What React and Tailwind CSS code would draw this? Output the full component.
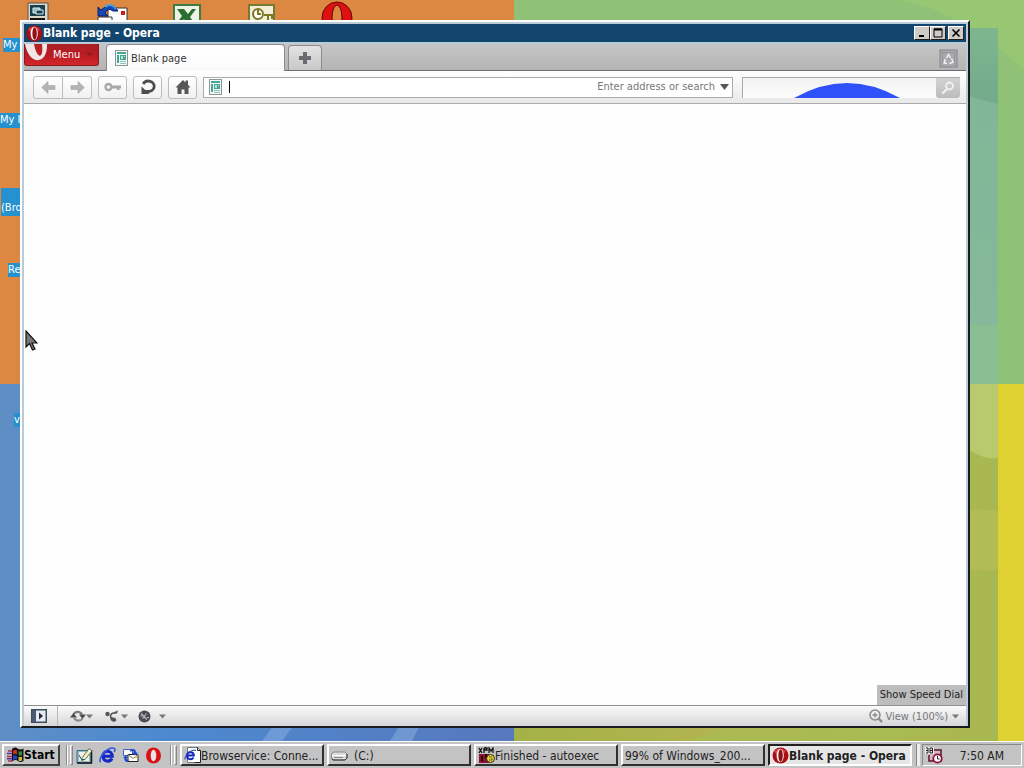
import { useState } from "react";

const RAISED = "border-2 border-t-white border-l-white border-r-[#404040] border-b-[#404040] bg-[#c3c3c3]";

const SHORTCUT_LABELS = [
  { text: "My", className: "top-[38px] left-[3px] h-3.5 w-[17px]" },
  { text: "My I", className: "top-[113px] left-0 h-[15px] w-5" },
  { text: "(Bro", className: "top-[188px] left-[1px] h-7 w-6 pt-[13px]" },
  { text: "Re", className: "top-[263px] left-2 h-3.5 w-4" },
  { text: "v", className: "top-[413px] left-[14px] h-3.5 w-[7px]" },
];

const TASKS = [
  { id: "browservice", text: "Browservice: Conne...", Icon: IePageIcon },
  { id: "drive", text: "(C:)", Icon: DriveIcon },
  { id: "autoexec", text: "Finished - autoexec", Icon: DosIcon },
  { id: "windows", text: "99% of Windows_200..." },
  { id: "opera", text: "Blank page - Opera", Icon: OperaIcon },
];

const QUICK_LAUNCH = [
  { label: "Show Desktop", Icon: DesktopIcon },
  { label: "Internet Explorer", Icon: IeIcon },
  { label: "Outlook Express", Icon: MailIcon },
  { label: "Opera", Icon: OperaFlatIcon },
];

/* ---------- Icons ---------- */

function OperaIcon() {
  return (
    <svg width="17" height="17" viewBox="0 0 17 17" aria-hidden="true">
      <ellipse cx="8.5" cy="8.5" rx="8" ry="8" fill="#a80d14" />
      <path d="M2 4Q8-1 14 4L11 8H5Z" fill="#dd3b3b" />
      <ellipse cx="8.2" cy="8.5" rx="3.6" ry="6.8" fill="#f4f0f0" />
      <ellipse cx="8.6" cy="8.5" rx="2.2" ry="6.2" fill="#8e1118" />
    </svg>
  );
}

function OperaFlatIcon() {
  return (
    <svg width="17" height="17" viewBox="0 0 17 17" aria-hidden="true">
      <ellipse cx="8.5" cy="8.5" rx="7.5" ry="8" fill="#d91218" />
      <ellipse cx="8.5" cy="8.5" rx="2.8" ry="5.8" fill="#e9e5e5" />
    </svg>
  );
}

function PageIcon() {
  return (
    <svg width="13" height="16" viewBox="0 0 13 16" className="shrink-0" aria-hidden="true">
      <rect x=".5" y=".5" width="12" height="15" fill="#f4f8f7" stroke="#8b9794" />
      <path d="M2 2h9v2H2zM2 5h2v8H2zM5 5h6v5H5z" fill="#45a693" />
      <path d="M6 6h2v3H6zM9 6h1v1H9z" fill="#b9e2d7" />
      <path d="M5 11.5h6M5 13.5h6" stroke="#8ac4b6" />
    </svg>
  );
}

function ArrowIcon({ flip }) {
  return (
    <svg width="15" height="13" viewBox="0 0 15 13" className={flip ? "-scale-x-100" : ""} aria-hidden="true">
      <path d="M7 .5v4h7v4H7v4L.7 6.5Z" fill="#b3b3b3" stroke="#a4a4a4" strokeWidth=".6" />
    </svg>
  );
}

function KeyIcon() {
  return (
    <svg width="18" height="10" viewBox="0 0 18 10" aria-hidden="true">
      <circle cx="4.5" cy="5" r="3" fill="none" stroke="#a8a8a8" strokeWidth="2.4" />
      <path d="M8 3.5h9v3h-1.5V8H13V6.5H8Z" fill="#a8a8a8" />
    </svg>
  );
}

function ReloadIcon() {
  return (
    <svg width="18" height="18" viewBox="0 0 18 18" aria-hidden="true">
      <path d="M4.2 6A5.8 5.2 0 1 1 9.500 13.500" fill="none" stroke="#4d4d4d" strokeWidth="2.8" />
      <path d="M2.500 8.500v7.500h8Z" fill="#4d4d4d" />
      <path d="M6 13.500h4" stroke="#4d4d4d" strokeWidth="3" />
    </svg>
  );
}

function HomeIcon() {
  return (
    <svg width="16" height="16" viewBox="0 0 16 16" aria-hidden="true">
      <path d="M8 1l2.500 2.400V1.500H13v4.300L15.500 8.500H13.500V15H9.500v-4.500h-3V15h-4V8.500H.5Z" fill="#575757" />
    </svg>
  );
}

function TrashIcon() {
  return (
    <svg width="19" height="19" viewBox="0 0 19 19" aria-hidden="true">
      <rect x="1" y="1" width="17" height="17" fill="#a9a9ae" stroke="#85858b" />
      <path d="M1 3.500h17M3.500 4v14M15.500 4v14" stroke="#96969d" />
      <path d="M7.500 9l2-3.500 2 3.500M12.500 9.500l1.500 3.500-3.500 1.500M8 14.500l-3-.5L6.500 10" fill="none" stroke="#f4f4f6" strokeWidth="1.500" />
    </svg>
  );
}

function SearchIcon() {
  return (
    <svg width="14" height="14" viewBox="0 0 14 14" fill="none" stroke="#f1f1f1" aria-hidden="true">
      <circle cx="8.500" cy="5" r="3.500" strokeWidth="1.800" />
      <path d="M6 8l-4.500 4.500" strokeWidth="2.400" />
    </svg>
  );
}

function Caret({ className = "" }) {
  return (
    <svg width="7" height="5" viewBox="0 0 7 5" className={`shrink-0 ${className}`} aria-hidden="true">
      <path d="M0 .5h7L3.500 4.500Z" fill="currentColor" />
    </svg>
  );
}

function PanelIcon() {
  return (
    <svg width="16" height="14" viewBox="0 0 16 14" aria-hidden="true">
      <rect x=".75" y=".75" width="14.500" height="12.500" fill="#e8ebef" stroke="#3f4c60" strokeWidth="1.500" />
      <path d="M1 1h4v12H1z" fill="#4a5a74" />
      <path d="M8 3.500v7L12 7Z" fill="#222b3a" />
    </svg>
  );
}

function SyncIcon() {
  return (
    <svg width="16" height="12" viewBox="0 0 16 12" aria-hidden="true">
      <path d="M3.500 4C5.500 1 10 1 12 4.500" fill="none" stroke="#77787c" strokeWidth="2.200" />
      <path d="M9 4.500h7L12.500 9Z" fill="#4b4c50" />
      <path d="M12.500 8.500C10.500 11.500 6 11.500 4 8" fill="none" stroke="#8b8c90" strokeWidth="2.200" />
      <path d="M0 7.500h7L3.500 3Z" fill="#4b4c50" />
    </svg>
  );
}

function UniteIcon() {
  return (
    <svg width="14" height="13" viewBox="0 0 14 13" fill="#55565a" aria-hidden="true">
      <circle cx="2.500" cy="4" r="2.200" />
      <path d="M8 2.500L13 .5l-1 3-4 .5Z" />
      <path d="M5 6.500c0 3 1 5 4 5.500l2.500-1.500-1-2.500L8 7.500Z" />
      <path d="M8 3c-2.500 1-3 3-2 5" fill="none" stroke="#55565a" strokeWidth="1.500" />
    </svg>
  );
}

function TurboIcon() {
  return (
    <svg width="13" height="13" viewBox="0 0 13 13" aria-hidden="true">
      <circle cx="6.500" cy="6.500" r="6" fill="#4a4b55" />
      <path d="M3 3.500l6 6M4.500 8.500l4-5M2.500 6h2M9 7.500h2" stroke="#b9bac1" strokeWidth="1.200" />
    </svg>
  );
}

function ZoomInIcon() {
  return (
    <svg width="14" height="14" viewBox="0 0 14 14" fill="none" stroke="#8b8b8b" aria-hidden="true">
      <circle cx="6" cy="6" r="5" strokeWidth="1.500" />
      <path d="M3.500 6h5M6 3.500v5" strokeWidth="1.300" />
      <path d="M9.500 9.500l3.500 3.500" strokeWidth="2.400" />
    </svg>
  );
}

function IeIcon() {
  return (
    <svg width="17" height="17" viewBox="0 0 17 17" fill="none" aria-hidden="true">
      <path d="M13 11.500C11 15.500 4 15 4 9S13 2.500 13.300 9.300H5" stroke="#1426c4" strokeWidth="3" />
      <path d="M1.500 15.500C-1 11 9-1 15.500 1.500c1.200.8.300 2.500-.5 3.500" stroke="#2d57dc" strokeWidth="1.500" />
    </svg>
  );
}

function IePageIcon() {
  return (
    <svg width="17" height="16" viewBox="0 0 17 16" fill="none" aria-hidden="true">
      <path d="M3.500.5h10l3 3v12h-13Z" fill="#fff" stroke="#777" />
      <path d="M13.500.5v3h3v12h-6" stroke="#222" />
      <path d="M9.500 10.500C7.500 13.500 3 12.500 3 8.500S9.500 4 9.800 8.500H3.500" stroke="#1426c4" strokeWidth="2" />
      <path d="M1 12.500C0 9 7 1.500 12 3.500" stroke="#2646b4" />
    </svg>
  );
}

function DesktopIcon() {
  return (
    <svg width="17" height="17" viewBox="0 0 17 17" aria-hidden="true">
      <path d="M1 3.500h14V16H1z" fill="#9fb8be" stroke="#35708c" />
      <path d="M3 5h10v9H3z" fill="#f0f2e6" />
      <path d="M1 16h14.500V3" fill="none" stroke="#101820" strokeWidth="1.500" />
      <path d="M6 11L13 1.500 16 4l-7 8.500-3.500 1Z" fill="#f3f0c8" stroke="#4a4a30" strokeWidth=".8" />
      <path d="M3 8l2.500 4.500H9" fill="none" stroke="#1e5f78" />
    </svg>
  );
}

function MailIcon() {
  return (
    <svg width="17" height="17" viewBox="0 0 17 17" aria-hidden="true">
      <path d="M1.500 2.500h9v6h-9z" fill="#fff" stroke="#3d63c6" />
      <path d="M6 7.500h10v7H6z" fill="#fff" stroke="#222" />
      <path d="M6 7.500l5 4 5-4" fill="none" stroke="#777" />
      <path d="M8 3.500c3-3 6-1.500 6 2h2l-3 3-3-3h2C12 4 10 3.500 8 5ZM6 15c-3 0-4-2-3.500-4H1l2.500-2.500L6 11H4.500c0 1 .5 2 2 2Z" fill="#1f46d0" />
      <path d="M13 9h2v2h-2z" fill="#e8c11a" />
    </svg>
  );
}

function DriveIcon() {
  return (
    <svg width="17" height="11" viewBox="0 0 17 11" aria-hidden="true">
      <path d="M3 2h11l2 2v4l-2 2H2L.5 8V4Z" fill="#dcdcdc" stroke="#888" />
      <path d="M1 5.500h14" stroke="#fff" />
      <path d="M1 8.500l1 1.500h12l2-2V4" fill="none" stroke="#333" />
      <path d="M3 7.500h9" stroke="#888" />
    </svg>
  );
}

function DosIcon() {
  return (
    <svg width="17" height="17" viewBox="0 0 17 17" aria-hidden="true">
      <path d="M1 1l3 5M4 1L1 6M6 1v5M6 1h3v2H6M11 6V1l2 3 2-3v5" fill="none" stroke="#111" strokeWidth="1.300" />
      <path d="M1 7h10v9H1z" fill="#8d1130" />
      <path d="M3 9h2v5H3zM7 7h2v4H7z" fill="#200" />
      <circle cx="12.500" cy="11.500" r="4" fill="#ead52b" stroke="#222" />
      <path d="M11 10h3M11 13h3v-2" stroke="#555" fill="none" />
    </svg>
  );
}

function WindowsFlag() {
  return (
    <svg width="18" height="16" viewBox="0 0 18 16" aria-hidden="true">
      <path d="M6 2Q9-.5 11.500 1.500t6 0v12.500q-3 2-5.500 0T6 14.500Z" fill="#111" />
      <path d="M7 4q2-2 4-.5v4Q9 6 7 7.500Z" fill="#c3311f" />
      <path d="M12.500 4q2 1 3.500 0v4q-2 1-3.500 0Z" fill="#2d8c48" />
      <path d="M7 9q2-1.500 4 0v4Q9 11.500 7 13Z" fill="#2a40c0" />
      <path d="M12.500 9.500q2 1 3.500 0v4q-2 1-3.500 0Z" fill="#d0b934" />
      <path d="M2 4h4M1 9.500h5M2 14h4" stroke="#a83050" strokeWidth="1.500" />
      <path d="M1 6.500h5M1 11.800h5" stroke="#5a2f9a" strokeWidth="1.500" />
    </svg>
  );
}

function TrayIcon() {
  return (
    <svg width="18" height="17" viewBox="0 0 18 17" fill="none" aria-hidden="true">
      <path d="M6 3h10v11H4V8" fill="#d7b8c4" stroke="#5d1030" strokeWidth="1.500" />
      <path d="M0 0h9v7H0z" fill="#eee" />
      <path d="M1 1h2v5H1M1 3.500h2M5 1h2.500v5H5V1M5 3.500h2.500" stroke="#222" />
      <circle cx="12.500" cy="11.500" r="4.200" fill="#fff" stroke="#8f1233" strokeWidth="1.800" />
      <path d="M12.500 9v3h2" stroke="#222" />
    </svg>
  );
}

function Wallpaper() {
  return (
    <svg className="absolute inset-0 h-full w-full" viewBox="0 0 1024 741" preserveAspectRatio="none" aria-hidden="true">
      <defs>
        <linearGradient id="blue" x1="0" x2="1">
          <stop offset="0" stopColor="#5f8ec5" />
          <stop offset=".3" stopColor="#4c8ad0" />
          <stop offset="1" stopColor="#5878bd" />
        </linearGradient>
        <linearGradient id="lime" x1="0" x2="1">
          <stop offset="0" stopColor="#a3b246" />
          <stop offset=".5" stopColor="#b5b452" />
          <stop offset="1" stopColor="#a8b850" />
        </linearGradient>
        <linearGradient id="teal" x1="0" x2="0" y1="0" y2="1">
          <stop offset="0" stopColor="#7db68e" />
          <stop offset=".2" stopColor="#73ab8c" />
          <stop offset="1" stopColor="#83b794" />
        </linearGradient>
      </defs>
      <rect width="514" height="384" fill="#dc8742" />
      <rect x="514" width="510" height="384" fill="#8fc276" />
      <path d="M900 0h124v70Q960 10 900 0Z" fill="#98c774" />
      <rect x="960" y="28" width="38" height="356" fill="url(#teal)" />
      <path d="M960 94l38 10v280h-38Z" fill="#88bb9c" opacity=".7" />
      <path d="M960 325h38v59h-38Z" fill="#8cc090" opacity=".7" />
      <rect y="384" width="514" height="357" fill="url(#blue)" />
      <path d="M262 741l12-16h20l-12 16ZM390 741l10-16h20l-8 16Z" fill="#82a9dc" opacity=".6" />
      <rect x="514" y="384" width="484" height="357" fill="url(#lime)" />
      <path d="M960 384h38v74q-14 3-38-14Z" fill="#b8ca6b" />
      <path d="M960 510h38v60h-38Z" fill="#bbc05a" opacity=".5" />
      <path d="M690 741l40-16h240l-80 16Z" fill="#a5be55" opacity=".6" />
      <rect x="998" y="384" width="26" height="357" fill="#dfd132" />
    </svg>
  );
}

/* ---------- Desktop ---------- */

// Only the tops of these stick out above the browser window
function DesktopIcons() {
  return (
    <>
      <svg className="absolute top-0 left-[27px]" width="22" height="24" viewBox="0 0 22 24" aria-hidden="true">
        <path d="M1 3h20v20H1z" fill="#ddd5c5" stroke="#555" />
        <path d="M3 5h15v11H3z" fill="#173f4c" />
        <path d="M6 8h7v5H6z" fill="#79bac2" stroke="#eee" />
        <path d="M9 10h7v4H9z" fill="#173f4c" stroke="#d9eeee" />
        <path d="M3 19h15" stroke="#111" strokeWidth="2" />
      </svg>
      <svg className="absolute top-0 left-[96px]" width="33" height="24" viewBox="0 0 33 24" aria-hidden="true">
        <path d="M12 8h19v15H12z" fill="#fff" stroke="#333" />
        <path d="M2 17h14v7H2z" fill="#fff" stroke="#333" />
        <path d="M25 11h4v4h-4z" fill="#d51616" />
        <path d="M2 7v9h10l-3-3q3-6 8-2h5Q16 0 5 10Z" fill="#1648b8" stroke="#0b1f68" />
        <path d="M9 7q6-5 11 2" fill="none" stroke="#49a0d6" strokeWidth="2" />
      </svg>
      <svg className="absolute top-0 left-[172px]" width="30" height="24" viewBox="0 0 30 24" aria-hidden="true">
        <rect x="2" y="5" width="26" height="20" fill="#eef3e6" stroke="#3e7b42" strokeWidth="2" />
        <path d="M5 9h7l4 5 4-5h4l-6 8 5 7h-8l-3-5-4 5H4l6-8Z" fill="#287030" />
      </svg>
      <svg className="absolute top-0 left-[247px]" width="30" height="24" viewBox="0 0 30 24" aria-hidden="true">
        <rect x="2" y="5" width="25" height="20" fill="#f2efd8" stroke="#757a30" strokeWidth="2" />
        <circle cx="11" cy="14" r="5" fill="#fff" stroke="#7d7720" strokeWidth="2" />
        <path d="M11 10v4h3M17 15h8v4M21 15v5" fill="none" stroke="#7d7720" strokeWidth="2" />
      </svg>
      <svg className="absolute top-0 left-[321px]" width="32" height="34" viewBox="0 0 32 34" aria-hidden="true">
        <ellipse cx="16" cy="18" rx="15" ry="16" fill="#e01010" stroke="#5e0808" />
        <ellipse cx="16" cy="18" rx="5" ry="13" fill="#dc8742" stroke="#5e0808" />
      </svg>
      {SHORTCUT_LABELS.map((s) => (
        <div
          key={s.text}
          className={`absolute whitespace-nowrap bg-[#2591cf] text-[11px] leading-3.5 text-white ${s.className}`}
        >
          {s.text}
        </div>
      ))}
    </>
  );
}

/* ---------- Browser window ---------- */

function TitleButton({ label, className = "", children }) {
  return (
    <button
      aria-label={label}
      className={`flex h-3.5 w-4 items-center justify-center border border-t-white border-l-white border-r-[#202020] border-b-[#202020] bg-[#cfcbc6] ${className}`}
    >
      {children}
    </button>
  );
}

function TitleBar() {
  return (
    <div className="flex h-[18px] shrink-0 items-center bg-[#12466f] pr-0.5 pl-0.5">
      <OperaIcon />
      <h1 className="flex-1 truncate text-[12px] leading-4 font-bold text-white">Blank page - Opera</h1>
      <TitleButton label="Minimize">
        <svg width="10" height="10" aria-hidden="true"><path d="M2 7h5v2H2z" /></svg>
      </TitleButton>
      <TitleButton label="Maximize">
        <svg width="10" height="10" aria-hidden="true">
          <path d="M1 1h8v8H1z" fill="none" stroke="#000" />
          <path d="M1 1.500h8" stroke="#000" strokeWidth="2" />
        </svg>
      </TitleButton>
      <TitleButton label="Close" className="ml-0.5">
        <svg width="10" height="10" aria-hidden="true">
          <path d="M1.500 1.500l7 7M8.500 1.500l-7 7" stroke="#000" strokeWidth="1.600" />
        </svg>
      </TitleButton>
    </div>
  );
}

function TabBar() {
  return (
    <div className="mt-0.5 flex h-[27px] shrink-0 items-end border-b border-[#6f6b70] bg-linear-to-b from-[#c6c6c6] to-[#b4b4b4]">
      <button className="flex h-[22px] w-[75px] items-center self-start overflow-hidden rounded-b-[3px] border border-t-0 border-[#8a1a20] bg-linear-to-b from-[#a92025] via-[#b81c22] to-[#d3262b] text-[11px] text-white">
        <svg width="24" height="21" viewBox="0 0 24 21" aria-hidden="true">
          <path d="M0 0H22C23 21 4 22 0 0Z" fill="#f1e6e6" />
          <path d="M9 0h8c2 15-5 16-8 0Z" fill="#b92026" />
        </svg>
        <span className="ml-1 pt-0.5">Menu</span>
        <Caret className="ml-1.5 text-[#8f1c20]" />
      </button>
      <div className="z-10 -mb-px ml-[7px] flex h-[27px] w-[179px] items-center gap-[3px] rounded-t-[4px] border border-b-0 border-[#8d8a8d] bg-linear-to-b from-white to-[#fafafa] pl-2 text-[11px] text-[#333]">
        <PageIcon />
        <span className="pt-0.5">Blank page</span>
      </div>
      <button
        aria-label="New tab"
        className="ml-[3px] flex h-[25px] w-[34px] items-center justify-center rounded-t-[4px] border border-b-0 border-[#8d8a8d] bg-linear-to-b from-[#e3e3e3] to-[#c8c8c8]"
      >
        <svg width="12" height="12" aria-hidden="true"><path d="M4 0h4v4h4v4H8v4H4V8H0V4h4Z" fill="#6c6970" /></svg>
      </button>
      <button aria-label="Closed tabs" className="mr-2 ml-auto self-center pt-0.5">
        <TrashIcon />
      </button>
    </div>
  );
}

function ToolButton({ label, className = "w-[29px] rounded-[3px]", children }) {
  return (
    <button
      aria-label={label}
      className={`flex h-[23px] shrink-0 items-center justify-center border border-[#bdbdbd] bg-linear-to-b from-white to-[#f1f1f1] ${className}`}
    >
      {children}
    </button>
  );
}

function AddressBar() {
  const [address, setAddress] = useState("");
  const [query, setQuery] = useState("");

  return (
    <div className="flex h-[33px] shrink-0 items-center gap-1.5 border-b border-[#aaa] bg-linear-to-b from-white to-[#e9e9e9] pr-1.5 pl-[9px]">
      <div className="flex">
        <ToolButton label="Back" className="w-[30px] rounded-l-[3px]"><ArrowIcon /></ToolButton>
        <ToolButton label="Forward" className="w-[29px] rounded-r-[3px] border-l-0"><ArrowIcon flip /></ToolButton>
      </div>
      <ToolButton label="Password manager"><KeyIcon /></ToolButton>
      <ToolButton label="Reload"><ReloadIcon /></ToolButton>
      <ToolButton label="Home"><HomeIcon /></ToolButton>
      <div className="flex h-[21px] flex-1 items-center gap-[7px] border border-[#aaa] bg-white pr-[3px] pl-[5px] text-[#555]">
        <PageIcon />
        <span className="h-3 w-px bg-black" />
        <input
          aria-label="Address"
          value={address}
          onChange={(e) => setAddress(e.target.value)}
          placeholder="Enter address or search"
          className="min-w-0 flex-1 bg-transparent pt-px text-[11px] outline-none placeholder:text-right placeholder:text-[#777]"
        />
        <svg width="9" height="6" viewBox="0 0 9 6" className="-ml-0.5 shrink-0" aria-hidden="true">
          <path d="M0 0h9L4.500 6Z" fill="currentColor" />
        </svg>
      </div>
      <div className="ml-[3px] flex h-[21px] w-[218px] overflow-hidden border-t border-l border-[#aaa] bg-linear-to-b from-[#f2f2f2] to-[#fcfcfc]">
        <div className="relative min-w-0 flex-1">
          <input
            aria-label="Search"
            value={query}
            onChange={(e) => setQuery(e.target.value)}
            className="h-full w-full bg-transparent px-1 text-[11px] outline-none"
          />
          <svg className="pointer-events-none absolute bottom-0 left-[51px]" width="106" height="15" viewBox="0 0 106 15" aria-hidden="true">
            <path d="M0 15Q53-15 106 15Z" fill="#2e51fa" />
          </svg>
        </div>
        <button aria-label="Search" className="flex w-6 items-center justify-center rounded-b-[3px] bg-linear-to-b from-[#d3d3d3] to-[#bcbcbc]">
          <SearchIcon />
        </button>
      </div>
    </div>
  );
}

function StatusBar() {
  return (
    <div className="flex h-[21px] shrink-0 items-center border-t border-[#8f8f8f] bg-linear-to-b from-[#fbfbfb] to-[#d6d6d8] text-[#77777b]">
      <button aria-label="Panels" className="ml-[7px]"><PanelIcon /></button>
      <span className="ml-2.5 h-full w-px bg-[#b9b9b9]" />
      <button aria-label="Synchronize" className="ml-3 flex items-center"><SyncIcon /><Caret /></button>
      <button aria-label="Unite" className="ml-3 flex items-center gap-0.5"><UniteIcon /><Caret /></button>
      <button aria-label="Turbo" className="ml-2.5 flex items-center gap-2"><TurboIcon /><Caret /></button>
      <button className="mr-[7px] ml-auto flex items-center text-[11px] leading-4">
        <ZoomInIcon />
        <span className="mr-1 ml-0.5 pt-px">View (100%)</span>
        <Caret />
      </button>
    </div>
  );
}

function BrowserWindow() {
  return (
    <section className="absolute top-5 right-[54px] bottom-[13px] left-5 flex flex-col border-t-2 border-r-2 border-b-2 border-l-2 border-t-white border-l-white border-r-[#181c20] border-b-[#181c20] bg-[#b9ccd8] p-0.5 pb-0">
      <TitleBar />
      <TabBar />
      <AddressBar />
      <main className="flex flex-1 items-end justify-end bg-[#fefefe]">
        <button className="h-5 bg-[#bdbdbd] px-[3px] text-[11px] text-[#222]">Show Speed Dial</button>
      </main>
      <StatusBar />
    </section>
  );
}

/* ---------- Taskbar ---------- */

function Grip() {
  return (
    <div className="flex gap-0.5 py-px">
      <span className="w-0.5 border-l border-[#888] bg-white" />
      <span className="w-[3px] border border-t-white border-l-white border-r-[#888] border-b-[#888]" />
    </div>
  );
}

function TaskButton({ task, active, onClick }) {
  const { text, Icon } = task;
  return (
    <button
      onClick={onClick}
      aria-pressed={active}
      className={`flex min-w-0 flex-1 items-center overflow-hidden border-2 pl-0.5 text-[12px] whitespace-nowrap text-[#222] ${
        active
          ? "border-t-[#202020] border-l-[#202020] border-r-white border-b-white bg-[#e6e6e6] font-bold"
          : "border-t-white border-l-white border-r-[#303030] border-b-[#303030] bg-[#c3c3c3]"
      }`}
    >
      {Icon && <span className="shrink-0"><Icon /></span>}
      <span className={task.id === "drive" ? "ml-1.5 pt-0.5" : "pt-0.5"}>{text}</span>
    </button>
  );
}

function Taskbar({ active, onSelect }) {
  return (
    <footer className="flex h-[27px] shrink-0 border-t border-white bg-[#c3c3c3] px-0.5 pt-0.5 pb-0.5 text-[12px]">
      <button className={`flex w-[58px] items-center pl-0.5 font-bold ${RAISED}`}>
        <WindowsFlag />
        <span>Start</span>
      </button>
      <div className="ml-1.5 flex"><Grip /></div>
      <div className="ml-[3px] flex items-center gap-1.5">
        {QUICK_LAUNCH.map(({ label, Icon }) => (
          <button key={label} aria-label={label}><Icon /></button>
        ))}
      </div>
      <div className="ml-2 flex"><Grip /></div>
      <nav className="ml-[3px] flex min-w-0 flex-1 gap-[3px]">
        {TASKS.map((t) => (
          <TaskButton key={t.id} task={t} active={active === t.id} onClick={() => onSelect(t.id)} />
        ))}
      </nav>
      <span className="ml-1 w-1 border-l border-[#888] bg-[#eee]" />
      <div className="ml-0.5 flex w-[100px] items-center justify-between border border-t-[#888] border-l-[#888] border-r-white border-b-white pr-[17px] pl-0.5">
        <TrayIcon />
        <time className="pt-0.5 text-[#222]">7:50 AM</time>
      </div>
    </footer>
  );
}

export default function App() {
  const [active, setActive] = useState("opera");

  return (
    <div className="flex h-screen flex-col overflow-hidden font-['DejaVu_Sans_Condensed','Noto_Sans',sans-serif]">
      <div className="relative min-h-0 flex-1 overflow-hidden">
        <Wallpaper />
        <DesktopIcons />
        <BrowserWindow />
        <svg className="pointer-events-none absolute top-[330px] left-[25px]" width="13" height="21" viewBox="0 0 13 21" aria-hidden="true">
          <path d="M1 1v16l3.500-3.500L7.500 20l2.500-1-3-6h5Z" fill="#777" stroke="#111" strokeWidth="1.200" />
        </svg>
      </div>
      <Taskbar active={active} onSelect={setActive} />
    </div>
  );
}
